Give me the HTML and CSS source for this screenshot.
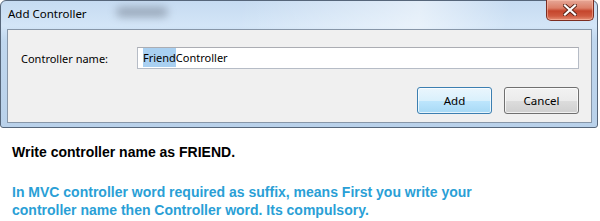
FILE: index.html
```html
<html lang="en"><head><meta charset="utf8">
<title>Add Controller</title>
<link rel="stylesheet" href="styles.css">
</head><body>
<div class="window">
    <div class="titlebar">
        <span class="title">Add Controller</span>
        <span class="ghost"></span>
        <button class="close" aria-label="Close">
            <svg width="14" height="12" viewBox="0 0 14 12"><path d="M2 1.5 L12 10.5 M12 1.5 L2 10.5" stroke="#5a2418" stroke-width="4" stroke-linecap="square"/><path d="M2 1.5 L12 10.5 M12 1.5 L2 10.5" stroke="#fff" stroke-width="2.2" stroke-linecap="square"/></svg>
        </button>
    </div>
    <div class="client">
        <div class="row">
            <label class="label" for="name">Controller name:</label>
            <div class="field" id="name"><span class="sel">Friend</span>Controller</div>
        </div>
        <div class="actions">
            <button class="btn default">Add</button>
            <button class="btn">Cancel</button>
        </div>
    </div>
</div>
<p class="note">Write controller name as FRIEND.</p>
<p class="hint">In MVC controller word required as suffix, means First you write your controller name then Controller word. Its compulsory.</p>
</body></html>
```

FILE: styles.css
```css
body {
    margin: 0;
    background: #fff;
    font-family: "Segoe UI", "Noto Sans", sans-serif;
}

/* dialog frame */
.window {
    box-sizing: border-box;
    width: 598px;
    height: 128px;
    border: 1px solid #56667a;
    border-radius: 6px 6px 3px 3px;
    padding: 0 5px 5px 6px;
    background: linear-gradient(to bottom, #c6dbf1 0, #d3e5f7 25px, #c0d7ee 40px, #b9d1ea 100%);
}

.titlebar {
    position: relative;
    height: 28px;
    background: linear-gradient(100deg, rgba(255,255,255,0) 40%, rgba(255,255,255,0.5) 70%, rgba(255,255,255,0) 85%);
    margin: 0 -5px 0 -6px;
    padding: 0 5px 0 6px;
}
.title {
    position: relative;
    display: block;
    padding: 5px 0 0 1px;
    font-size: 11.5px;
    color: #000;
    line-height: 16px;
}
.ghost {
    position: absolute;
    left: 115px; top: 6px;
    width: 52px; height: 10px;
    background: #6f7a8a;
    border-radius: 5px;
    filter: blur(4px);
    opacity: 0.55;
}
.close {
    position: absolute;
    top: -1px; right: 3px;
    width: 48px; height: 21px;
    padding: 0;
    border: 1px solid #7b2d22;
    border-top: 0;
    border-radius: 0 0 5px 5px;
    background: linear-gradient(to bottom, #e6a797 0, #dc7f68 40%, #c5452c 55%, #cf5a40 80%, #e59076 100%);
    box-shadow: inset 0 0 0 1px rgba(255,200,180,0.5);
    display: flex;
    align-items: center;
    justify-content: center;
}

/* client area */
.client {
    box-sizing: border-box;
    height: 94px;
    background: #f0f0f0;
    border: 1px solid #8796a8;
    padding: 17px 12px 0 13px;
    font-size: 11px;
    color: #000;
}
.row {
    display: flex;
    align-items: center;
    height: 22px;
}
.label {
    width: 116px;
}
.field {
    box-sizing: border-box;
    flex: 1;
    height: 22px;
    border: 1px solid #b6bcc6;
    border-top-color: #abadb3;
    background: #fff;
    padding: 2px 5px 0;
    line-height: 16px;
}
.sel {
    background: #a9d0f1;
    padding: 2px 0 2px;
}

.actions {
    display: flex;
    justify-content: flex-end;
    gap: 12px;
    margin-top: 18px;
}
.btn {
    width: 75px;
    height: 27px;
    border: 1px solid #707070;
    border-radius: 3px;
    font-family: inherit;
    font-size: 11.5px;
    color: #000;
    background: linear-gradient(to bottom, #f2f2f2 0, #ebebeb 50%, #dddddd 50%, #cfcfcf 100%);
    box-shadow: inset 0 0 0 1px rgba(255,255,255,0.7);
}
.btn.default {
    border-color: #3c7fb1;
    background: linear-gradient(to bottom, #eaf6fd 0, #d9f0fc 50%, #bee6fd 50%, #a7d9f5 100%);
}

/* text below the screenshot */
.note, .hint {
    font-family: "Liberation Sans", Arial, sans-serif;
    font-weight: bold;
    font-size: 14px;
    margin: 0 0 0 12px;
}
.note {
    margin-top: 16px;
    line-height: 17px;
    color: #000;
}
.hint {
    margin-top: 23px;
    line-height: 17.5px;
    color: #2a9fd6;
    width: 480px;
}
```
